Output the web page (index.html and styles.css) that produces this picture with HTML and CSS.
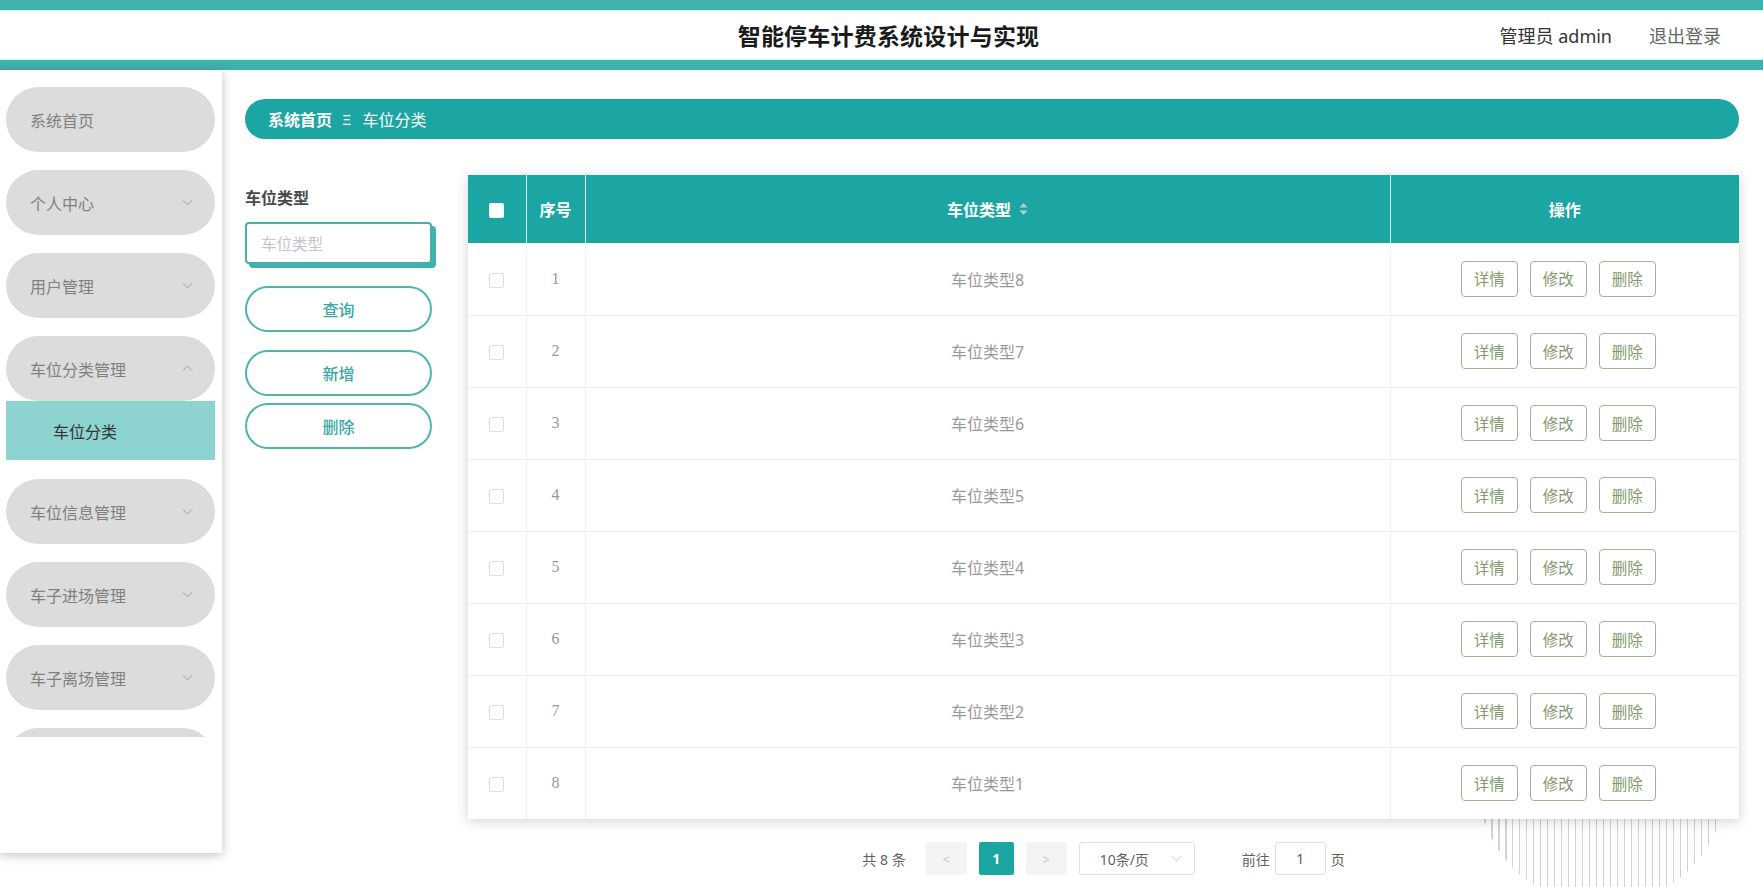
FILE: index.html
```html
<!DOCTYPE html>
<html lang="zh">
<head>
<meta charset="utf-8">
<title>智能停车计费系统设计与实现</title>
<link rel="stylesheet" href="styles.css">
</head>
<body>
<header class="topbar">
  <div class="topbar-side"></div>
  <h1 class="topbar-title">智能停车计费系统设计与实现</h1>
  <div class="topbar-user">
    <span class="user-name">管理员 admin</span>
    <span class="logout">退出登录</span>
  </div>
</header>
<div class="layout">
  <aside class="sidebar">
    <nav class="menu">
      <div class="menu-item"><span>系统首页</span></div>
      <div class="menu-item"><span>个人中心</span><svg class="chev" viewBox="0 0 12 7"><path d="M1 1L6 6L11 1"/></svg></div>
      <div class="menu-item"><span>用户管理</span><svg class="chev" viewBox="0 0 12 7"><path d="M1 1L6 6L11 1"/></svg></div>
      <div class="menu-item open"><span>车位分类管理</span><svg class="chev" viewBox="0 0 12 7"><path d="M1 6L6 1L11 6"/></svg></div>
      <div class="submenu-item">车位分类</div>
      <div class="menu-item"><span>车位信息管理</span><svg class="chev" viewBox="0 0 12 7"><path d="M1 1L6 6L11 1"/></svg></div>
      <div class="menu-item"><span>车子进场管理</span><svg class="chev" viewBox="0 0 12 7"><path d="M1 1L6 6L11 1"/></svg></div>
      <div class="menu-item"><span>车子离场管理</span><svg class="chev" viewBox="0 0 12 7"><path d="M1 1L6 6L11 1"/></svg></div>
      <div class="menu-item"></div>
    </nav>
  </aside>
  <main class="main">
    <div class="deco"></div>
    <div class="breadcrumb">
      <span class="crumb-home">系统首页</span>
      <span class="crumb-sep">Ξ</span>
      <span class="crumb-current">车位分类</span>
    </div>
    <div class="content">
      <div class="filters">
        <div class="filter-label">车位类型</div>
        <div class="filter-input"><span class="placeholder">车位类型</span></div>
        <button class="pill-btn btn-search">查询</button>
        <button class="pill-btn btn-add">新增</button>
        <button class="pill-btn btn-del">删除</button>
      </div>
      <div class="table-area">
        <div class="table-card">
          <table class="data-table">
            <colgroup>
              <col class="c-check"><col class="c-idx"><col class="c-type"><col class="c-ops">
            </colgroup>
            <thead>
              <tr>
                <th><span class="head-check"></span></th>
                <th>序号</th>
                <th><span class="sort-head">车位类型<svg class="caret" viewBox="0 0 8 12"><path d="M4 0L8 4.5H0Z"/><path d="M0 7.5H8L4 12Z"/></svg></span></th>
                <th>操作</th>
              </tr>
            </thead>
            <tbody>
              <tr><td><span class="row-check"></span></td><td class="idx">1</td><td>车位类型8</td><td><div class="ops"><span class="op-btn">详情</span><span class="op-btn">修改</span><span class="op-btn">删除</span></div></td></tr>
              <tr><td><span class="row-check"></span></td><td class="idx">2</td><td>车位类型7</td><td><div class="ops"><span class="op-btn">详情</span><span class="op-btn">修改</span><span class="op-btn">删除</span></div></td></tr>
              <tr><td><span class="row-check"></span></td><td class="idx">3</td><td>车位类型6</td><td><div class="ops"><span class="op-btn">详情</span><span class="op-btn">修改</span><span class="op-btn">删除</span></div></td></tr>
              <tr><td><span class="row-check"></span></td><td class="idx">4</td><td>车位类型5</td><td><div class="ops"><span class="op-btn">详情</span><span class="op-btn">修改</span><span class="op-btn">删除</span></div></td></tr>
              <tr><td><span class="row-check"></span></td><td class="idx">5</td><td>车位类型4</td><td><div class="ops"><span class="op-btn">详情</span><span class="op-btn">修改</span><span class="op-btn">删除</span></div></td></tr>
              <tr><td><span class="row-check"></span></td><td class="idx">6</td><td>车位类型3</td><td><div class="ops"><span class="op-btn">详情</span><span class="op-btn">修改</span><span class="op-btn">删除</span></div></td></tr>
              <tr><td><span class="row-check"></span></td><td class="idx">7</td><td>车位类型2</td><td><div class="ops"><span class="op-btn">详情</span><span class="op-btn">修改</span><span class="op-btn">删除</span></div></td></tr>
              <tr><td><span class="row-check"></span></td><td class="idx">8</td><td>车位类型1</td><td><div class="ops"><span class="op-btn">详情</span><span class="op-btn">修改</span><span class="op-btn">删除</span></div></td></tr>
            </tbody>
          </table>
        </div>
        <div class="pagination">
          <span class="total">共 8 条</span>
          <span class="pg-btn pg-prev">&lt;</span>
          <span class="pg-num">1</span>
          <span class="pg-btn pg-next">&gt;</span>
          <span class="pg-size">10条/页<svg class="pg-chev" viewBox="0 0 12 7"><path d="M1 1L6 6L11 1"/></svg></span>
          <span class="pg-goto">前往</span>
          <span class="pg-input">1</span>
          <span class="pg-unit">页</span>
        </div>
      </div>
    </div>
  </main>
</div>
</body>
</html>
```

FILE: styles.css
```css
* { box-sizing: border-box; }

html, body {
  margin: 0;
  padding: 0;
  width: 1763px;
  height: 887px;
  overflow: hidden;
  background: #fff;
  font-family: "Noto Sans", "Noto Sans CJK SC", sans-serif;
}

.topbar {
  height: 70px;
  border-top: 10px solid #40b2ae;
  border-bottom: 10px solid #40b2ae;
  box-shadow: inset 0 1px 0 #c8f1ef, inset 0 -1px 0 #c8f1ef;
  display: grid;
  grid-template-columns: 1fr auto 1fr;
  align-items: center;
}

.topbar-title {
  margin: 0 0 0 14px;
  font-size: 23px;
  font-weight: 700;
  color: #1a1a1a;
  letter-spacing: 0.2px;
}

.topbar-user {
  justify-self: end;
  display: flex;
  gap: 37px;
  padding-right: 42px;
  font-size: 18px;
}

.user-name { color: #333; }
.logout { color: #666; }

.layout {
  display: flex;
  height: 817px;
}

.sidebar {
  width: 222px;
  height: 783px;
  flex: none;
  background: #fff;
  box-shadow: 0 2px 10px rgba(0, 0, 0, 0.25);
  position: relative;
  z-index: 2;
}

.menu {
  height: 667px;
  overflow: hidden;
  padding-top: 17px;
  display: flex;
  flex-direction: column;
}

.menu-item {
  flex: none;
  margin-left: 6px;
  width: 209px;
  height: 65px;
  border-radius: 33px;
  background: #dcdcdc;
  display: flex;
  align-items: center;
  justify-content: space-between;
  padding: 0 22px 0 24px;
  font-size: 16px;
  color: #808080;
  margin-bottom: 18px;
}

.menu-item.open { margin-bottom: 0; }

.chev {
  width: 11px;
  height: 7px;
  fill: none;
  stroke: #9a9a9a;
  stroke-width: 1;
}

.submenu-item {
  flex: none;
  margin-left: 6px;
  width: 209px;
  height: 59px;
  background: #8dd3d0;
  display: flex;
  align-items: center;
  padding-left: 47px;
  font-size: 16px;
  color: #333;
  margin-bottom: 19px;
}

.main {
  flex: 1;
  position: relative;
  padding: 29px 24px 0 23px;
  overflow: hidden;
}

.deco {
  position: absolute;
  left: 1255px;
  top: 585px;
  width: 250px;
  height: 250px;
  border-radius: 50%;
  background: repeating-linear-gradient(90deg, #d2d2d2 0 1.5px, transparent 1.5px 7px);
  z-index: 0;
}

.breadcrumb {
  position: relative;
  z-index: 1;
  height: 40px;
  border-radius: 20px;
  background: #1ca6a3;
  display: flex;
  align-items: center;
  padding-left: 23px;
  color: #fff;
  font-size: 16px;
}

.crumb-home { font-weight: 700; }
.crumb-sep { margin: 0 11px 0 10px; font-size: 15px; }

.content {
  position: relative;
  z-index: 1;
  display: flex;
  gap: 31px;
  margin-top: 36px;
}

.filters {
  width: 192px;
  flex: none;
  padding-top: 13px;
  display: flex;
  flex-direction: column;
}

.filter-label {
  font-size: 16px;
  font-weight: 700;
  color: #4a4a4a;
  line-height: 20px;
  margin-bottom: 14px;
}

.filter-input {
  width: 187px;
  height: 42px;
  border: 2px solid #40b2ae;
  border-radius: 4px;
  box-shadow: 4px 4px 0 #40b2ae;
  display: flex;
  align-items: center;
  padding-left: 14px;
  background: #fff;
}

.placeholder {
  color: #c0c4cc;
  font-size: 15.5px;
}

.pill-btn {
  width: 187px;
  height: 46px;
  border: 2px solid #4db6ac;
  border-radius: 23px;
  background: #fff;
  color: #3aa8a3;
  font-family: inherit;
  font-size: 16px;
  font-weight: 500;
  padding: 0;
}

.btn-search { margin-top: 22px; }
.btn-add { margin-top: 18px; }
.btn-del { margin-top: 7px; }

.table-area {
  flex: 1;
  min-width: 0;
}

.table-card {
  background: #fff;
  box-shadow: 0 2px 12px rgba(0, 0, 0, 0.18);
}

.data-table {
  width: 100%;
  border-collapse: collapse;
  table-layout: fixed;
}

.c-check { width: 58px; }
.c-idx { width: 59px; }
.c-ops { width: 349px; }

.data-table th {
  height: 68px;
  background: #1ca6a3;
  color: #fff;
  font-size: 16px;
  font-weight: 700;
  text-align: center;
  border-left: 1px solid #e6f5f4;
  padding: 0;
}

.data-table th:first-child { border-left: none; }

.data-table td {
  height: 72px;
  text-align: center;
  color: #999;
  font-size: 16px;
  border-top: 1px solid #ebeef5;
  border-left: 1px solid #ebeef5;
  padding: 0;
}

.data-table td:first-child { border-left: none; }
.data-table tbody tr:first-child td { border-top: none; }

.idx {
  font-family: "Liberation Serif", "Noto Sans CJK SC", serif;
  font-size: 15px;
}

.head-check {
  display: inline-block;
  width: 15px;
  height: 15px;
  background: #fff;
  border-radius: 2px;
  vertical-align: middle;
}

.row-check {
  display: inline-block;
  width: 15px;
  height: 15px;
  border: 1px solid #dcdfe6;
  border-radius: 2px;
  background: #fff;
  vertical-align: middle;
}

.sort-head {
  display: inline-flex;
  align-items: center;
  gap: 8px;
}

.caret {
  width: 9px;
  height: 12px;
  fill: #b9cdd6;
}

.ops {
  display: flex;
  justify-content: center;
  gap: 12px;
  padding-right: 13px;
}

.op-btn {
  width: 57px;
  height: 36px;
  border: 1px solid #a9ae98;
  border-radius: 4px;
  display: flex;
  align-items: center;
  justify-content: center;
  color: #859a6c;
  font-size: 15.5px;
  background: #fff;
}

.pagination {
  margin-top: 23px;
  display: flex;
  justify-content: center;
  align-items: center;
  height: 33px;
  font-size: 14px;
  color: #606266;
}

.total { margin-right: 20px; }

.pg-btn {
  width: 41px;
  height: 33px;
  background: #f4f4f5;
  color: #c0c4cc;
  border-radius: 2px;
  display: flex;
  align-items: center;
  justify-content: center;
  font-size: 13px;
}

.pg-num {
  width: 35px;
  height: 33px;
  background: #1ca6a3;
  color: #fff;
  font-weight: 700;
  border-radius: 2px;
  display: flex;
  align-items: center;
  justify-content: center;
  margin: 0 12px;
  font-size: 14px;
}

.pg-size {
  margin-left: 12px;
  width: 116px;
  height: 33px;
  border: 1px solid #dcdfe6;
  border-radius: 3px;
  display: flex;
  align-items: center;
  padding-left: 20px;
  gap: 22px;
  color: #606266;
}

.pg-chev {
  width: 11px;
  height: 7px;
  fill: none;
  stroke: #c0c4cc;
  stroke-width: 1;
}

.pg-goto { margin-left: 47px; margin-right: 5px; }

.pg-input {
  width: 51px;
  height: 33px;
  border: 1px solid #dcdfe6;
  border-radius: 3px;
  display: flex;
  align-items: center;
  justify-content: center;
}

.pg-unit { margin-left: 5px; }
```
